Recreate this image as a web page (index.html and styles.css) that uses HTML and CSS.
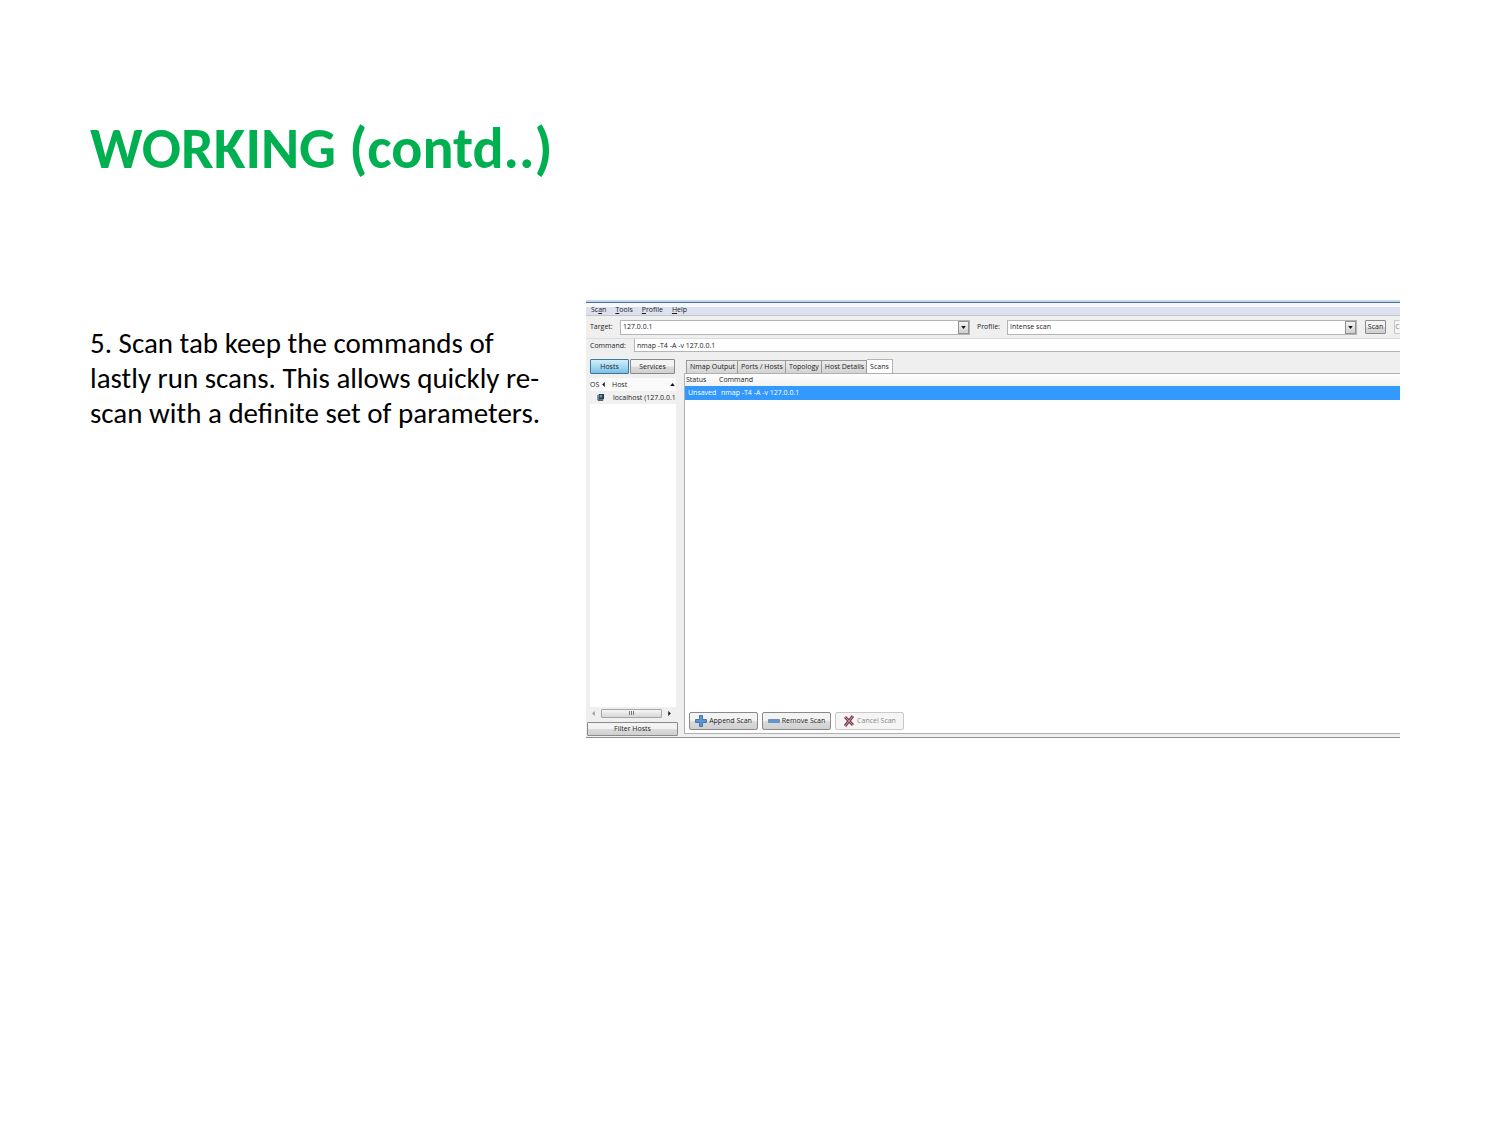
FILE: index.html
```html
<!DOCTYPE html>
<html lang="en">
<head>
<meta charset="utf-8">
<title>WORKING (contd..)</title>
<link rel="stylesheet" href="styles.css">
</head>
<body>
<main class="slide">
  <h1 class="title">WORKING (contd..)</h1>
  <div class="content">
    <p class="note">5. Scan tab keep the commands of lastly run scans. This allows quickly re-scan with a definite set of parameters.</p>
    <section class="app" aria-label="Zenmap">
      <div class="titlebar"></div>
      <nav class="menubar">
        <button class="menu" type="button">Sc<u>a</u>n</button>
        <button class="menu" type="button"><u>T</u>ools</button>
        <button class="menu" type="button"><u>P</u>rofile</button>
        <button class="menu" type="button"><u>H</u>elp</button>
      </nav>
      <div class="target-row">
        <label class="target-label" for="target">Target:</label>
        <div class="combo">
          <input class="field" id="target" type="text" value="127.0.0.1">
          <button class="drop" type="button" aria-label="Recent targets"><svg class="arrow" viewBox="0 0 6 4"><path d="M0 0h6L3 4z"/></svg></button>
        </div>
        <label class="profile-label" for="profile">Profile:</label>
        <div class="combo">
          <select class="field" id="profile"><option>Intense scan</option></select>
          <span class="drop"><svg class="arrow" viewBox="0 0 6 4"><path d="M0 0h6L3 4z"/></svg></span>
        </div>
        <button class="btn scan" type="button">Scan</button>
        <button class="btn cut" type="button" disabled>C</button>
      </div>
      <div class="command-row">
        <label class="command-label" for="command">Command:</label>
        <input class="field command" id="command" type="text" value="nmap -T4 -A -v 127.0.0.1">
      </div>
      <div class="panes">
        <aside class="hosts">
          <div class="switch">
            <button class="btn active" type="button">Hosts</button>
            <button class="btn" type="button">Services</button>
          </div>
          <div class="host-list">
            <table class="host-table">
              <thead><tr>
                <th class="os">OS <svg class="sort-left" viewBox="0 0 3 6"><path d="M3 0v6L0 3z"/></svg></th>
                <th>Host</th>
                <th class="sort"><svg class="arrow" viewBox="0 0 6 4"><path d="M0 4h6L3 0z"/></svg></th>
              </tr></thead>
              <tbody><tr>
                <td class="os-icon"><svg class="computer" viewBox="0 0 8 8"><path fill="#8a9aa8" d="M0 1h3v6H0z"/><path fill="#25384c" d="M2 0h6v6H2z"/><path fill="#6794b8" d="M3 1h3v3H3z"/><path fill="#56626e" d="M1 6h6v2H1z"/></svg></td>
                <td class="host-name" colspan="2">localhost (127.0.0.1</td>
              </tr></tbody>
            </table>
          </div>
          <div class="scrollbar">
            <svg class="sort-left dim" viewBox="0 0 3 6"><path d="M3 0v6L0 3z"/></svg>
            <span class="thumb"><i></i><i></i><i></i></span>
            <svg class="sort-left" viewBox="0 0 3 6"><path d="M0 0v6l3-3z"/></svg>
          </div>
          <button class="btn filter" type="button">Filter Hosts</button>
        </aside>
        <div class="details">
          <div class="tabs" role="tablist">
            <button class="tab" role="tab" type="button">Nmap Output</button>
            <button class="tab" role="tab" type="button">Ports / Hosts</button>
            <button class="tab" role="tab" type="button">Topology</button>
            <button class="tab" role="tab" type="button">Host Details</button>
            <button class="tab current" role="tab" type="button" aria-selected="true">Scans</button>
          </div>
          <div class="scans">
            <table class="scan-table">
              <thead><tr><th class="status">Status</th><th>Command</th></tr></thead>
              <tbody><tr><td>Unsaved</td><td class="cmd">nmap -T4 -A -v 127.0.0.1</td></tr></tbody>
            </table>
            <div class="actions">
              <button class="btn action" type="button"><svg class="icon" viewBox="0 0 12 12"><path fill="#5b97d5" stroke="#4674ad" d="M4.500.5h3v4h4v3h-4v4h-3v-4h-4v-3h4z"/></svg>Append Scan</button>
              <button class="btn action" type="button"><svg class="icon" viewBox="0 0 12 12"><path fill="#5b97d5" stroke="#6f8fb8" d="M.5 4.500h11v3H.5z"/></svg>Remove Scan</button>
              <button class="btn action" type="button" disabled><svg class="icon" viewBox="0 0 12 12"><path stroke="#7b4050" stroke-width="3" d="M2 2l8 8M10 1L2 11"/><path stroke="#d08a96" d="M2 2l8 8M10 1L2 11"/></svg>Cancel Scan</button>
            </div>
          </div>
        </div>
      </div>
    </section>
  </div>
</main>
</body>
</html>
```
FILE: styles.css
```css
* { box-sizing: border-box; }

body { margin: 0; background: #fff; }

.slide {
  padding: 113px 100px 80px 90px;
  font-family: Carlito, Lato, sans-serif;
  color: #000;
}

.title {
  margin: 0;
  font-size: 58px;
  line-height: 72px;
  font-weight: 700;
  color: #00b050;
}

.content {
  display: grid;
  grid-template-columns: 460px 1fr;
  column-gap: 36px;
  align-items: start;
  padding-top: 115px;
}

.note { margin: 26px 0 0; font-size: 29px; line-height: 35px; }

.app {
  overflow: hidden;
  min-width: 0;
  background: #efefef;
  border-bottom: 1px solid #8d9294;
  font-family: "Open Sans", "Noto Sans", sans-serif;
  font-size: 7px;
  line-height: 10px;
  color: #1c1c1c;
}

.app button, .app input, .app select { font: inherit; color: inherit; }

.app svg { display: block; flex: none; }

.titlebar {
  height: 7px;
  background: #f5f9fd;
  border-top: 2px solid #c3d9f0;
  box-shadow: inset 0 1px #4d6b9c;
}

.menubar {
  display: flex;
  gap: 9px;
  height: 9px;
  padding-left: 5px;
  background: #dce0ef;
  border-bottom: 1px solid #c2c5cc;
}

.app .menu {
  padding: 0 0 3px;
  border: 0;
  background: none;
  line-height: 5px;
}

.target-row {
  display: flex;
  align-items: center;
  height: 23px;
  padding-left: 4px;
  border-bottom: 1px solid #dcdcdc;
}

.target-label { width: 30px; }
.profile-label { width: 30px; margin-left: 7px; }

.combo {
  display: flex;
  flex: 1;
  min-width: 0;
  height: 15px;
  background: #fff;
  border: 1px solid #b5b5b5;
}

.field {
  flex: 1;
  min-width: 0;
  margin: 0;
  padding: 0 2px;
  border: 0;
  border-radius: 0;
  background: #fff;
  appearance: none;
}

.drop {
  display: grid;
  place-items: center;
  width: 11px;
  padding: 0;
  border: 1px solid #929292;
  background: linear-gradient(#f4f4f4, #cfcfcf);
}

.arrow { width: 5px; height: 3px; fill: #111; }

.btn {
  padding: 0;
  border: 1px solid #8a8a8a;
  border-radius: 1px;
  background: linear-gradient(#f3f3f3 45%, #dadada 55%, #d0d0d0);
  text-align: center;
}

.btn:disabled { background: #f5f5f5; border-color: #c8c8c8; }
.app .btn:disabled { color: #888; }

.scan { width: 21px; height: 14px; margin-left: 8px; }

.cut {
  width: 6px;
  height: 14px;
  margin-left: 8px;
  border-right: 0;
}

.command-row {
  display: flex;
  align-items: center;
  height: 13px;
  padding-left: 4px;
}

.command-label { width: 44px; }

.command {
  height: 13px;
  border: 1px solid #b5b5b5;
  border-width: 0 0 1px 1px;
}

.panes { display: flex; }

.hosts {
  display: flex;
  flex-direction: column;
  width: 92px;
  padding: 7px 0 1px 1px;
}

.switch { display: flex; gap: 1px; padding: 0 3px; }
.switch .btn { flex: 1; height: 15px; }

.switch .active {
  flex: none;
  width: 39px;
  border-color: #3c7597;
  background: linear-gradient(#d3edfb, #a6daf4 50%, #79c0e6);
}

.host-list {
  flex: 1;
  margin: 4px 2px 0 3px;
  background: #fff;
  overflow: hidden;
}

.host-table, .scan-table { width: 100%; border-collapse: collapse; table-layout: fixed; }

.app th, .app td {
  padding: 0;
  font-weight: 400;
  text-align: left;
  white-space: nowrap;
}

.host-table th { height: 13px; background: #fafafa; }
.host-table td { height: 13px; background: #f0f0f0; }
.host-table th.os { width: 22px; }
.host-table th.sort { width: 6px; }
.app .os svg { display: inline-block; margin-left: 1px; }
.sort-left { width: 3px; height: 5px; fill: #111; }
.computer { width: 7px; height: 7px; margin-left: 7px; }
.app .host-name { padding-left: 1px; }

.scrollbar {
  display: flex;
  align-items: center;
  justify-content: space-between;
  height: 12px;
  padding: 0 7px 0 5px;
}

.dim { fill: #999; }

.thumb {
  display: flex;
  align-items: center;
  justify-content: center;
  gap: 1px;
  width: 61px;
  height: 9px;
  border: 1px solid #a5a5a5;
  border-radius: 1px;
  background: linear-gradient(#f6f6f6, #d6d6d6);
}

.thumb i { width: 1px; height: 4px; background: #777; }

.filter { height: 14px; margin-top: 3px; }

.details {
  display: flex;
  flex-direction: column;
  flex: 1;
  min-width: 0;
  margin-left: 6px;
  padding: 7px 0 3px;
}

.tabs { display: flex; align-items: flex-end; height: 14px; padding-left: 2px; }

.tab {
  height: 13px;
  margin: 0;
  padding: 0 2px 0 3px;
  border: 1px solid #999;
  border-width: 1px 1px 0 0;
  background: linear-gradient(#ececec, #d3d3d3);
  white-space: nowrap;
}

.tab:first-child { border-left-width: 1px; }
.tab.current { height: 14px; padding-right: 3px; background: #fff; border-color: #b4b4b4; }

.scans {
  display: flex;
  flex-direction: column;
  justify-content: space-between;
  min-height: 361px;
  border: 1px solid #b0b0b0;
  border-right: 0;
  background: #fff;
}

.scan-table th { height: 12px; background: linear-gradient(#fff, #f1f1f1); }
.app .scan-table th.status { width: 34px; padding-left: 1px; }
.scan-table td { height: 14px; background: #3399fe; color: #fff; }
.app .scan-table td:first-child { padding-left: 3px; }
.app .scan-table .cmd { padding-left: 2px; }

.actions { display: flex; gap: 4px; padding: 0 4px 3px; }

.action {
  display: flex;
  align-items: center;
  justify-content: center;
  gap: 2px;
  width: 69px;
  height: 18px;
  margin: 0;
  white-space: nowrap;
  border-radius: 2px;
}

.icon { width: 12px; height: 12px; fill: none; }
```
